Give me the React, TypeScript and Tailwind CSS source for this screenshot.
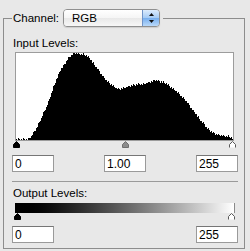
import React from 'react';

// histogram outline, page coords (x, top of black)
const outline: [number, number][] = [
  [16, 139], [27, 139], [29, 138], [31, 136], [33, 133], [36, 128], [39, 122], [41, 118],
  [43, 113], [46, 107], [49, 99], [51, 93], [53, 87], [55, 82], [57, 77], [59, 72],
  [62, 67], [65, 63], [68, 58], [71, 55], [73, 53], [76, 53], [79, 54], [82, 54],
  [85, 55], [88, 57], [90, 59], [92, 62], [95, 66], [98, 70], [101, 74], [104, 78],
  [107, 81], [110, 84], [113, 86], [116, 88], [119, 89], [122, 88], [126, 87], [130, 86],
  [134, 85], [138, 84], [142, 84], [146, 83], [150, 82], [154, 80], [158, 81], [162, 82],
  [165, 83], [168, 85], [172, 88], [176, 91], [180, 95], [184, 99], [188, 104], [191, 108],
  [194, 112], [197, 116], [200, 120], [203, 123], [206, 127], [209, 130], [212, 132], [215, 134],
  [218, 135], [221, 135], [224, 136], [227, 136], [230, 137], [232, 138],
];

const topAt = (x: number) => {
  for (let i = 0; i < outline.length - 1; i++) {
    const [x0, y0] = outline[i];
    const [x1, y1] = outline[i + 1];
    if (x >= x0 && x <= x1) return y0 + ((y1 - y0) * (x - x0)) / (x1 - x0);
  }
  return 139;
};

const histogramPath = () => {
  let d = 'M0,87';
  for (let c = 0; c < 217; c++) {
    const jitter = ((c * 37 + 11) % 5) - 2;
    let top = Math.round(topAt(c + 16) - 53 + jitter * 0.5);
    if (top > 87) top = 87;
    if (top < 0) top = 0;
    d += ` L${c},${top} L${c + 1},${top}`;
  }
  return d + ' L217,87 Z';
};

const ValueBox = ({ value }: { value: string }) => (
  <div className="flex h-[17px] w-[42px] items-center border border-[#9a9a9a] border-t-[#767676] bg-white pl-[2px] text-[12px] leading-none text-black">
    {value}
  </div>
);

const Handle = ({ kind, left }: { kind: 'black' | 'gray' | 'white'; left: string }) => (
  <svg width="7" height="7" viewBox="0 0 7 7" className={`absolute top-0 ${left}`}>
    {kind === 'white' ? (
      <path d="M0.5,6.5 L0.5,3.5 L3.5,0.5 L6.5,3.5 L6.5,6.5" fill="#fff" stroke="#5a5a5a" strokeWidth="1" />
    ) : (
      <polygon
        points="3.5,0.5 6.5,3.5 6.5,6.5 0.5,6.5 0.5,3.5"
        fill={kind === 'black' ? '#000' : '#8c8c8c'}
        stroke={kind === 'black' ? '#000' : '#6e6e6e'}
        strokeWidth="1"
      />
    )}
  </svg>
);

export default function App() {
  return (
    <div className="h-[251px] w-[250px] bg-[#e8e8e8] px-[3px] pt-[9px] font-['Liberation_Sans',Arial,sans-serif] text-black">
      <fieldset className="flex h-[240px] w-[242px] flex-col border border-[#8d8d8d] pb-[5px] pl-[8px] pr-[6px]">
        <legend className="pl-[1px] pr-[3px]">
          <div className="flex h-[18px] items-center">
            <span className="text-[11.5px] leading-[14px]">Channel:</span>
            <div className="ml-[4px] flex h-[18px] w-[97px] overflow-hidden rounded-[4px] border border-[#8f8f8f] shadow-[0_1px_1px_rgba(0,0,0,0.12)]">
              <div className="flex flex-1 items-center bg-[linear-gradient(to_bottom,#ffffff,#f5f5f5_50%,#e8e8e8_51%,#f7f7f7)] pl-[8px] text-[11.5px] leading-[14px]">
                RGB
              </div>
              <div className="flex w-[17px] items-center justify-center border-l border-[#6f93c8] bg-[linear-gradient(to_bottom,#dcebfc,#a3caf4_50%,#76aeee_51%,#b9d9f9)]">
                <svg width="7" height="12" viewBox="0 0 7 12">
                  <polygon points="3.5,1 6,4 1,4" fill="#111" />
                  <polygon points="1,8 6,8 3.5,11" fill="#111" />
                </svg>
              </div>
            </div>
          </div>
        </legend>

        <div className="ml-[1px] mt-[9px] text-[11.5px] leading-[14px]">Input Levels:</div>
        <div className="ml-[3px] mt-[2px] h-[89px] w-[219px] border border-[#9c9c9c] bg-white">
          <svg width="217" height="87" viewBox="0 0 217 87" shapeRendering="crispEdges" className="block">
            <path d={histogramPath()} fill="#000" />
          </svg>
        </div>
        <div className="relative h-[7px]">
          <Handle kind="black" left="left-[1px]" />
          <Handle kind="gray" left="left-[110px]" />
          <Handle kind="white" left="left-[217px]" />
        </div>
        <div className="mt-[7px] flex justify-between">
          <ValueBox value="0" />
          <ValueBox value="1.00" />
          <ValueBox value="255" />
        </div>

        <div className="mt-[9px] h-px bg-[#9a9a9a]" />

        <div className="ml-[1px] mt-[4px] text-[11.5px] leading-[14px]">Output Levels:</div>
        <div className="ml-[3px] mt-[3px] h-[10px] w-[220px] border-r border-[#8a8a8a] bg-linear-to-r from-black to-white" />
        <div className="relative h-[7px]">
          <Handle kind="black" left="left-[2px]" />
          <Handle kind="white" left="left-[216px]" />
        </div>
        <div className="mt-[6px] flex justify-between">
          <ValueBox value="0" />
          <ValueBox value="255" />
        </div>
      </fieldset>
    </div>
  );
}
